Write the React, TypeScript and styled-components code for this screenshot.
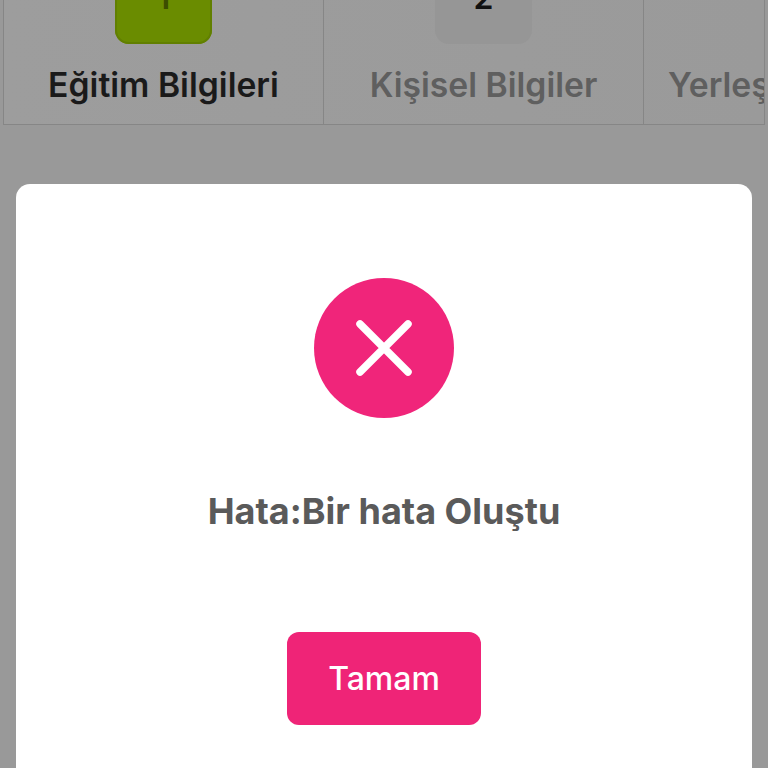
import React from "react";
import styled, { createGlobalStyle } from "styled-components";

const Global = createGlobalStyle`
  html, body { margin: 0; padding: 0; background: #999999; }
  * { box-sizing: border-box; }
  body { font-family: Inter, "Noto Sans", sans-serif; }
`;

const Screen = styled.div`
  width: 768px;
  height: 768px;
  overflow: hidden;
  background: #999999;
  display: flex;
  flex-direction: column;
  align-items: stretch;
`;

const Tabs = styled.div`
  flex: none;
  height: 179px;
  margin: -54px 3px 59px 3px;
  display: grid;
  grid-template-columns: 320px 320px 1fr;
  background: linear-gradient(90deg, #9d9d9d, #9a9a9a);
  border-left: 1px solid #868686;
  border-right: 1px solid #868686;
  border-bottom: 1px solid #868686;
  overflow: hidden;
`;

const Tab = styled.div<{ $clip?: boolean }>`
  display: flex;
  flex-direction: column;
  gap: 21px;
  min-width: 0;
  overflow: hidden;
  border-right: ${(p) => (p.$clip ? "none" : "1px solid #868686")};
  align-items: ${(p) => (p.$clip ? "flex-start" : "center")};
  padding-left: ${(p) => (p.$clip ? "24px" : "0")};
`;

const StepBox = styled.div<{ $active?: boolean }>`
  flex: none;
  width: 97px;
  height: 98px;
  border-radius: 14px;
  display: flex;
  align-items: center;
  justify-content: center;
  padding-top: 5px;
  font-size: 32px;
  font-weight: 600;
  color: ${(p) => (p.$active ? "#3c4d00" : "#111111")};
  background: ${(p) => (p.$active ? "#6a8c00" : "#969696")};
  box-shadow: ${(p) => (p.$active ? "inset 0 0 0 2px #617f00" : "none")};
`;

const GhostBox = styled(StepBox)`
  margin-left: 97px;
`;

const TabLabel = styled.span<{ $active?: boolean }>`
  font-size: 33.7px;
  line-height: 40px;
  font-weight: 600;
  white-space: nowrap;
  color: ${(p) => (p.$active ? "#1a1a1a" : "#5f5f5f")};
`;

const Modal = styled.div`
  flex: 1;
  margin: 0 16px;
  background: #ffffff;
  border-radius: 14px 14px 0 0;
  display: flex;
  flex-direction: column;
  align-items: center;
  padding-top: 94px;
`;

const ErrorIcon = styled.div`
  flex: none;
  width: 140px;
  height: 140px;
  border-radius: 50%;
  background: #f0257a;
  display: flex;
  align-items: center;
  justify-content: center;
`;

const Message = styled.p`
  margin: 70px 0 0 0;
  font-size: 36px;
  line-height: 46px;
  font-weight: 700;
  color: #5a5a5a;
`;

const OkButton = styled.button`
  margin-top: 98px;
  width: 194px;
  height: 93px;
  border: none;
  border-radius: 12px;
  background: #ef2477;
  color: #ffffff;
  font-family: inherit;
  font-size: 32px;
  font-weight: 500;
`;

export default function App() {
  return (
    <>
      <Global />
      <Screen>
        <Tabs>
          <Tab>
            <StepBox $active>1</StepBox>
            <TabLabel $active>Eğitim Bilgileri</TabLabel>
          </Tab>
          <Tab>
            <StepBox>2</StepBox>
            <TabLabel>Kişisel Bilgiler</TabLabel>
          </Tab>
          <Tab $clip>
            <GhostBox />
            <TabLabel>Yerleşim Bilgileri</TabLabel>
          </Tab>
        </Tabs>
        <Modal>
          <ErrorIcon>
            <svg width="56" height="56" viewBox="0 0 56 56" fill="none">
              <path d="M4 4 L52 52 M52 4 L4 52" stroke="#ffffff" strokeWidth="7.5" strokeLinecap="round" />
            </svg>
          </ErrorIcon>
          <Message>Hata:Bir hata Oluştu</Message>
          <OkButton>Tamam</OkButton>
        </Modal>
      </Screen>
    </>
  );
}
